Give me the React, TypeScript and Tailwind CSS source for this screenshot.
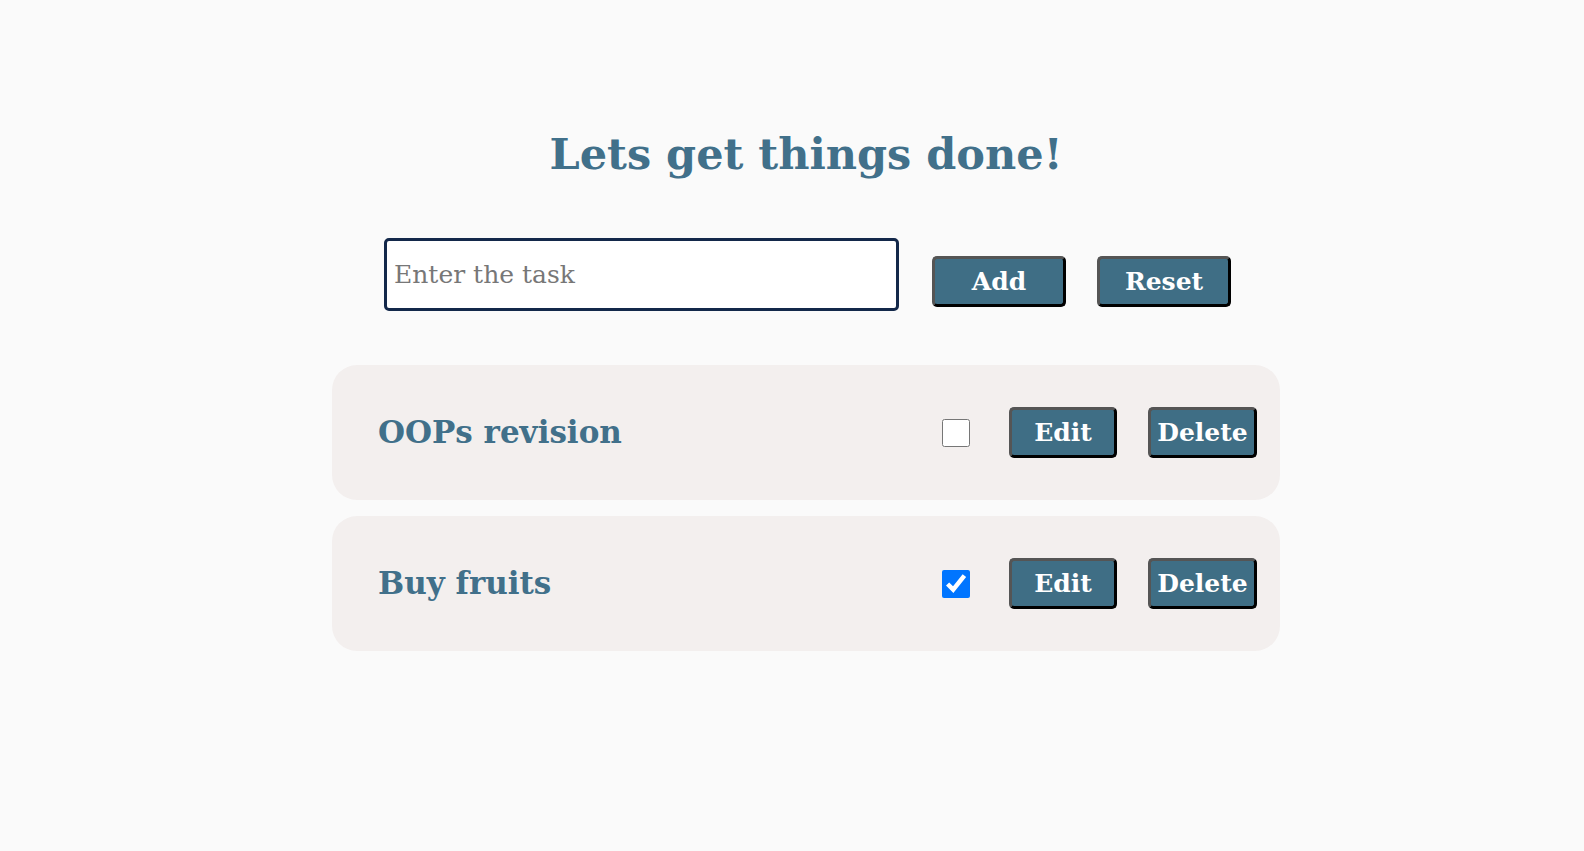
import React from "react";

const tasks = [
  { text: "OOPs revision", done: false },
  { text: "Buy fruits", done: true },
];

const btn =
  "h-[51px] rounded-[5px] border-[3px] border-t-[#555] border-l-[#555] border-b-black border-r-black bg-[#3f6e85] text-white font-bold text-[25px] leading-none";

export default function App() {
  return (
    <div
      className="min-h-[851px] w-full bg-[#fafafa]"
      style={{ fontFamily: '"DejaVu Serif", "Liberation Serif", serif' }}
    >
      <div className="ml-[332px] w-[948px] pt-[126px]">
        <h1 className="text-center text-[43px] font-bold leading-[56px] text-[#41708a]">
          Lets get things done!
        </h1>
        <div className="mt-[56px] flex items-end pl-[52px]">
          <input
            type="text"
            placeholder="Enter the task"
            className="h-[73px] w-[515px] rounded-[5px] border-[3px] border-[#13284a] bg-white px-[7px] text-[25px] text-black outline-none placeholder:text-[#777]"
          />
          <button className={`${btn} mb-[4px] ml-[33px] w-[134px]`}>Add</button>
          <button className={`${btn} mb-[4px] ml-[31px] w-[134px]`}>Reset</button>
        </div>
        <div className="mt-[54px] flex flex-col gap-[16px]">
          {tasks.map((t) => (
            <div
              key={t.text}
              className="flex h-[135px] items-center rounded-[25px] bg-[#f3efee] pl-[46px] pr-[23px]"
            >
              <span className="flex-1 text-[31px] font-bold text-[#41708a]">{t.text}</span>
              <input
                type="checkbox"
                defaultChecked={t.done}
                className="h-[28px] w-[28px]"
              />
              <button className={`${btn} ml-[39px] w-[108px]`}>Edit</button>
              <button className={`${btn} ml-[31px] w-[109px]`}>Delete</button>
            </div>
          ))}
        </div>
      </div>
    </div>
  );
}
